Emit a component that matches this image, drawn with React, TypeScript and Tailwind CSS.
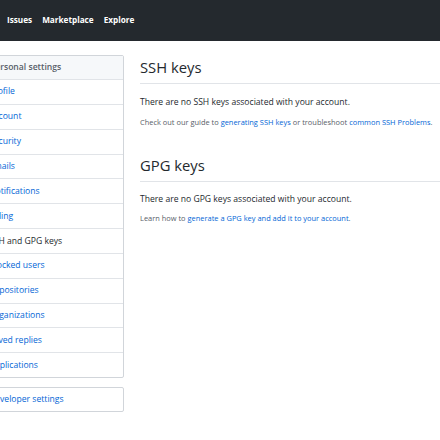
import React from "react";

const items = [
  "Profile",
  "Account",
  "Security",
  "Emails",
  "Notifications",
  "Billing",
  "SSH and GPG keys",
  "Blocked users",
  "Repositories",
  "Organizations",
  "Saved replies",
  "Applications",
];

export default function App() {
  return (
    <div
      className="w-[440px] h-[440px] overflow-hidden bg-white relative"
      style={{ fontFamily: '"Open Sans", "Noto Sans", sans-serif' }}
    >
      <div className="h-[41px] bg-[#24292e] flex items-center pl-[7px] gap-[10px] text-white font-bold text-[8.2px]">
        <span>Issues</span>
        <span>Marketplace</span>
        <span>Explore</span>
      </div>
      <div className="flex gap-[16px] pt-[14px]">
        <div className="ml-[-22px] w-[146px] shrink-0 flex flex-col gap-[9px]">
          <div className="border border-[#d1d5da] rounded-[2px] flex flex-col">
            <div className="h-[23px] bg-[#f6f8fa] flex items-center pl-[11px] text-[8.6px] font-semibold text-[#586069]">
              Personal settings
            </div>
            {items.map((it) => {
              const active = it === "SSH and GPG keys";
              return (
                <div
                  key={it}
                  className={`h-[24.85px] border-t border-[#e1e4e8] flex items-center pl-[10px] text-[8.6px] ${
                    active ? "text-[#24292e] font-medium" : "text-[#0366d6]"
                  }`}
                >
                  {it}
                </div>
              );
            })}
          </div>
          <div className="border border-[#d1d5da] rounded-[2px] h-[25px] flex items-center pl-[10px] text-[8.6px] text-[#0366d6]">
            Developer settings
          </div>
        </div>
        <div className="w-[400px] shrink-0 text-[#24292e]">
          <div className="border-b border-[#e1e4e8] pb-[5px] pt-[2px]">
            <h2 className="text-[14.8px] leading-[21px]">SSH keys</h2>
          </div>
          <p className="text-[8.6px] mt-[12px] leading-[13px]">
            There are no SSH keys associated with your account.
          </p>
          <p className="text-[7.45px] mt-[7px] leading-[12px] text-[#586069]">
            Check out our guide to{" "}
            <span className="text-[#0366d6]">generating SSH keys</span> or troubleshoot{" "}
            <span className="text-[#0366d6]">common SSH Problems</span>.
          </p>
          <div className="border-b border-[#e1e4e8] pb-[5px] mt-[27px]">
            <h2 className="text-[14.8px] leading-[21px]">GPG keys</h2>
          </div>
          <p className="text-[8.6px] mt-[11px] leading-[13px]">
            There are no GPG keys associated with your account.
          </p>
          <p className="text-[7.45px] mt-[6px] leading-[12px] text-[#586069]">
            Learn how to{" "}
            <span className="text-[#0366d6]">generate a GPG key and add it to your account</span>.
          </p>
        </div>
      </div>
    </div>
  );
}
